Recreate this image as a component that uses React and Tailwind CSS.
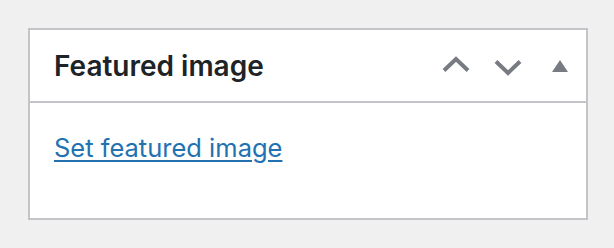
import { useState } from "react"

const IconButton = ({ label, children }) => (
  <button
    type="button"
    aria-label={label}
    className="w-[52px] h-full flex items-center justify-center text-[#787c82]"
  >
    {children}
  </button>
)

export default function App() {
  const [open, setOpen] = useState(true)

  return (
    <div
      className="w-[614px] h-[248px] bg-[#f0f0f1] p-[28px]"
      style={{ fontFamily: "Inter, 'Noto Sans', sans-serif" }}
    >
      <div className="w-[560px] h-[192px] bg-white border-2 border-[#c3c4c7] flex flex-col">
        {/* Header */}
        <div className="h-[73px] flex items-center border-b-2 border-[#c3c4c7] shrink-0">
          <h2 className="flex-1 pl-[24px] text-[28px] leading-[40px] font-semibold text-[#1d2327]">
            Featured image
          </h2>
          <div className="flex h-full items-center">
            <IconButton label="Move up">
              <svg width="28" height="16" viewBox="0 0 28 16" className="mt-[-3px]">
                <polyline points="2,14.5 14,3 26,14.5" fill="none" stroke="currentColor" strokeWidth="4" />
              </svg>
            </IconButton>
            <IconButton label="Move down">
              <svg width="28" height="16" viewBox="0 0 28 16" className="mt-[4px]">
                <polyline points="2,1.5 14,13 26,1.5" fill="none" stroke="currentColor" strokeWidth="4" />
              </svg>
            </IconButton>
            <IconButton label="Toggle panel">
              <svg
                width="16"
                height="12"
                viewBox="0 0 16 12"
                onClick={() => setOpen(!open)}
              >
                <polygon points="8,0 16,12 0,12" fill="currentColor" />
              </svg>
            </IconButton>
          </div>
        </div>

        {/* Body */}
        <div className="flex-1 pt-[25px] pl-[24px]">
          <a
            href="#"
            className="text-[25.5px] leading-[40px] text-[#2271b1] underline decoration-2 underline-offset-[3px]"
          >
            Set featured image
          </a>
        </div>
      </div>
    </div>
  )
}
